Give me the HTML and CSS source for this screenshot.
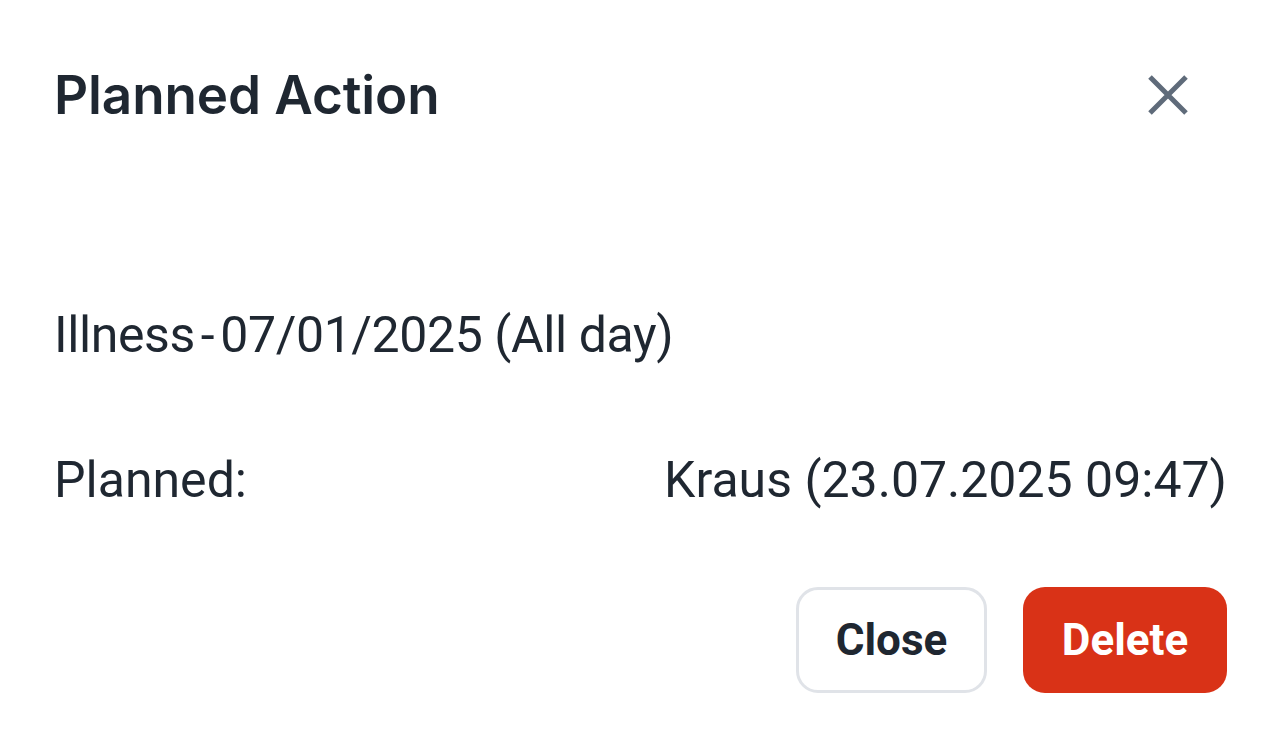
FILE: index.html
```html
<!DOCTYPE html>
<html>
<head>
<meta charset="utf-8">
<link rel="stylesheet" href="styles.css">
</head>
<body>
<div class="dialog">
  <div class="header">
    <h1 class="title">Planned Action</h1>
    <button class="icon-close" aria-label="Close">
      <svg viewBox="0 0 42 42" width="42" height="42"><path d="M3 3 L39 39 M39 3 L3 39" stroke="#5f6b7a" stroke-width="5" stroke-linecap="butt"/></svg>
    </button>
  </div>
  <div class="body">
    <p class="summary">Illness<span class="sep"> - </span>07/01/2025 (All day)</p>
    <div class="row">
      <span>Planned:</span>
      <span>Kraus (23.07.2025 09:47)</span>
    </div>
  </div>
  <div class="footer">
    <button class="btn btn-outline">Close</button>
    <button class="btn btn-danger">Delete</button>
  </div>
</div>
</body>
</html>
```
FILE: styles.css
```css
html, body { margin: 0; padding: 0; background: #ffffff; }
.dialog {
  width: 1279px;
  height: 744px;
  box-sizing: border-box;
  padding: 0 52px 0 54px;
  color: #1f2731;
  font-family: Roboto, "Noto Sans", sans-serif;
}
.header {
  display: flex;
  justify-content: space-between;
  align-items: center;
  height: 190px;
  padding-right: 38px;
}
.title {
  margin: 0;
  font-family: Inter, sans-serif;
  font-weight: 600;
  font-size: 53px;
  letter-spacing: -0.1px;
}
.icon-close {
  border: 0;
  background: none;
  padding: 0;
  width: 42px;
  height: 42px;
  display: flex;
}
.body { font-size: 50px; letter-spacing: 0; }
.summary { margin: 0; line-height: 60px; padding-top: 115px; letter-spacing: -0.4px; }
.sep { word-spacing: -6px; }
.row {
  display: flex;
  justify-content: space-between;
  line-height: 60px;
  margin-top: 85px;
}
.footer {
  display: flex;
  justify-content: flex-end;
  gap: 36px;
  margin-top: 77px;
}
.btn {
  font-family: Roboto, sans-serif;
  font-weight: 700;
  font-size: 44px;
  height: 106px;
  border-radius: 22px;
  padding: 0;
  cursor: pointer;
}
.btn-outline {
  background: #fff;
  border: 3px solid #e0e3e8;
  color: #1f2731;
  width: 191px;
}
.btn-danger {
  background: #d93217;
  border: 0;
  color: #fff;
  width: 204px;
}
```
